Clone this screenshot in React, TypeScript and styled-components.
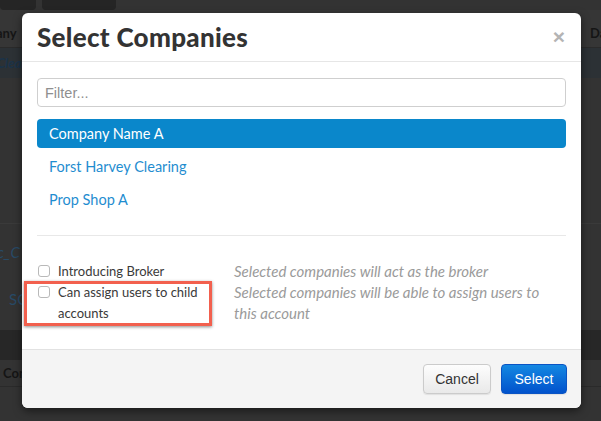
import React from 'react'
import styled, { createGlobalStyle } from 'styled-components'

const avenir = `Lato, "Noto Sans", sans-serif`
const helvetica = `"Liberation Sans", Arial, sans-serif`

const GlobalStyle = createGlobalStyle`
  html, body {
    margin: 0;
    padding: 0;
    background: #333;
  }
  * {
    box-sizing: border-box;
  }
`

const companies = ['Company Name A', 'Forst Harvey Clearing', 'Prop Shop A']

const options = [
  {
    label: 'Introducing Broker',
    hint: 'Selected companies will act as the broker',
    flagged: false,
  },
  {
    label: 'Can assign users to child accounts',
    hint: 'Selected companies will be able to assign users to this account',
    flagged: true,
  },
]

function BackgroundPage() {
  return (
    <Backdrop>
      <Tabs>
        <Tab $w={36} />
        <Tab $w={74} />
      </Tabs>
      <HeaderRow>
        <HeadCell>any</HeadCell>
        <HeadCell>Da</HeadCell>
      </HeaderRow>
      <HighlightRow>
        <RowLink>Clear</RowLink>
      </HighlightRow>
      <Gap $h={145} />
      <PlainRow>
        <span>c_C</span>
        <span>SC</span>
      </PlainRow>
      <DarkBand />
      <TotalsRow>Con</TotalsRow>
    </Backdrop>
  )
}

export default function App() {
  return (
    <>
      <GlobalStyle />
      <Screen>
        <BackgroundPage />
        <Modal>
          <ModalHeader>
            <Title>Select Companies</Title>
            <Close>×</Close>
          </ModalHeader>
          <ModalBody>
            <Filter placeholder="Filter..." />
            <CompanyList>
              {companies.map((name, i) => (
                <CompanyItem key={name} $active={i === 0}>
                  {name}
                </CompanyItem>
              ))}
            </CompanyList>
            <Divider />
            <Options>
              {options.map((opt) => (
                <OptionRow key={opt.label}>
                  <OptionLabel>
                    <Checkbox />
                    <span>{opt.label}</span>
                    {opt.flagged ? <Callout /> : null}
                  </OptionLabel>
                  <OptionHint>{opt.hint}</OptionHint>
                </OptionRow>
              ))}
            </Options>
          </ModalBody>
          <ModalFooter>
            <Button $w={68}>Cancel</Button>
            <Button $w={66} $primary>
              Select
            </Button>
          </ModalFooter>
        </Modal>
      </Screen>
    </>
  )
}

const Screen = styled.div`
  position: relative;
  width: 601px;
  height: 421px;
  overflow: hidden;
  background: #333;
`

const Backdrop = styled.div`
  display: flex;
  flex-direction: column;
  height: 100%;
`

const Tabs = styled.div`
  display: flex;
  gap: 6px;
  height: 10px;
`

const Tab = styled.div<{ $w: number }>`
  width: ${(p) => p.$w}px;
  background: #252525;
  border-radius: 0 0 4px 4px;
`

const HeaderRow = styled.div`
  display: flex;
  justify-content: space-between;
  align-items: center;
  height: 38px;
  padding-top: 8px;
  background: #363636;
  border-bottom: 1px solid #2a2a2a;
  font-family: ${avenir};
  font-weight: 700;
  font-size: 13px;
  color: #151515;
`

const HeadCell = styled.span`
  &:first-child {
    margin-left: -4px;
  }
  &:last-child {
    padding-left: 12px;
    border-left: 1px solid #2a2a2a;
    width: 24px;
  }
`

const HighlightRow = styled.div`
  display: flex;
  align-items: center;
  height: 30px;
  background: #2c3135;
`

const RowLink = styled.span`
  margin-left: -3px;
  font-family: ${avenir};
  font-style: italic;
  font-weight: 700;
  font-size: 13px;
  color: #1b3349;
`

const Gap = styled.div<{ $h: number }>`
  height: ${(p) => p.$h}px;
  flex-shrink: 0;
`

const PlainRow = styled.div`
  display: flex;
  flex-direction: column;
  gap: 29px;
  height: 107px;
  padding-top: 19px;
  border-top: 1px solid #3a3a3a;
  font-family: ${avenir};
  font-size: 15px;
  line-height: 18px;
  color: #284a66;
  span:first-child {
    margin-left: -3px;
    font-style: italic;
  }
  span:last-child {
    margin-left: 9px;
  }
`

const DarkBand = styled.div`
  height: 30px;
  background: #272727;
`

const TotalsRow = styled.div`
  display: flex;
  align-items: center;
  height: 27px;
  padding-left: 3px;
  border-bottom: 1px solid #2a2a2a;
  font-family: ${avenir};
  font-weight: 700;
  font-size: 13px;
  color: #151515;
`

const Modal = styled.div`
  position: absolute;
  left: 22px;
  top: 13px;
  width: 559px;
  height: 395px;
  display: flex;
  flex-direction: column;
  background: #fff;
  border-radius: 6px;
  overflow: hidden;
  box-shadow: 0 3px 9px rgba(0, 0, 0, 0.5);
`

const ModalHeader = styled.div`
  display: flex;
  align-items: center;
  justify-content: space-between;
  height: 49px;
  padding: 0 16px 0 15px;
  border-bottom: 1px solid #e6e6e6;
`

const Title = styled.h3`
  margin: 0;
  font-family: ${avenir};
  font-weight: 900;
  font-size: 26px;
  color: #333;
  letter-spacing: 0.3px;
`

const Close = styled.span`
  font-family: ${helvetica};
  font-weight: 700;
  font-size: 21px;
  line-height: 1;
  color: #b4b4b4;
  margin-top: -1px;
`

const ModalBody = styled.div`
  flex: 1;
  padding: 16px 15px 0;
`

const Filter = styled.input`
  display: block;
  width: 100%;
  height: 29px;
  padding: 0 7px;
  border: 1px solid #cfcfcf;
  border-radius: 4px;
  font-family: ${helvetica};
  font-size: 14.5px;
  color: #333;
  outline: none;
  &::placeholder {
    color: #8f8f8f;
  }
`

const CompanyList = styled.ul`
  list-style: none;
  margin: 12px 0 0;
  padding: 0;
  display: flex;
  flex-direction: column;
  gap: 4px;
`

const CompanyItem = styled.li<{ $active?: boolean }>`
  display: flex;
  align-items: center;
  height: 29px;
  padding: 0 12px;
  border-radius: 4px;
  font-family: ${avenir};
  font-size: 14.5px;
  color: ${(p) => (p.$active ? '#fff' : '#1f8dd0')};
  background: ${(p) => (p.$active ? '#0a87cb' : 'transparent')};
`

const Divider = styled.hr`
  margin: 21px 0 0;
  border: 0;
  border-top: 1px solid #e8e8e8;
`

const Options = styled.div`
  display: flex;
  flex-direction: column;
  padding-top: 25px;
`

const OptionRow = styled.div`
  display: grid;
  grid-template-columns: 185px 1fr;
  column-gap: 12px;
  line-height: 21px;
`

const OptionLabel = styled.label`
  position: relative;
  display: flex;
  align-items: flex-start;
  gap: 8px;
  padding-left: 1px;
  font-family: ${avenir};
  font-size: 13px;
  color: #3a3a3a;
`

const Checkbox = styled.span`
  flex-shrink: 0;
  width: 12px;
  height: 12px;
  margin-top: 4px;
  border: 1px solid #b9b9b9;
  border-radius: 3px;
  background: #fff;
`

const Callout = styled.span`
  position: absolute;
  left: -13px;
  top: -1px;
  width: 188px;
  height: 45px;
  border: 3px solid #f2604e;
  box-shadow: 0 1px 3px rgba(0, 0, 0, 0.45);
  pointer-events: none;
`

const OptionHint = styled.span`
  padding-right: 16px;
  font-family: ${avenir};
  font-style: italic;
  font-size: 15px;
  color: #9a9a9a;
`

const ModalFooter = styled.div`
  display: flex;
  justify-content: flex-end;
  align-items: center;
  gap: 10px;
  height: 59px;
  padding: 0 14px 0 15px;
  background: #f4f4f4;
  border-top: 1px solid #e2e2e2;
`

const Button = styled.button<{ $primary?: boolean; $w: number }>`
  width: ${(p) => p.$w}px;
  height: 30px;
  padding: 0;
  border-radius: 4px;
  font-family: ${helvetica};
  font-size: 14px;
  cursor: pointer;
  color: ${(p) => (p.$primary ? '#fff' : '#333')};
  border: 1px solid ${(p) => (p.$primary ? '#0a54c4' : '#cbcbcb')};
  background: ${(p) =>
    p.$primary
      ? 'linear-gradient(#1488e2, #0152cc)'
      : 'linear-gradient(#fdfdfd, #e9e9e9)'};
  box-shadow: 0 1px 1px rgba(0, 0, 0, 0.08);
`
